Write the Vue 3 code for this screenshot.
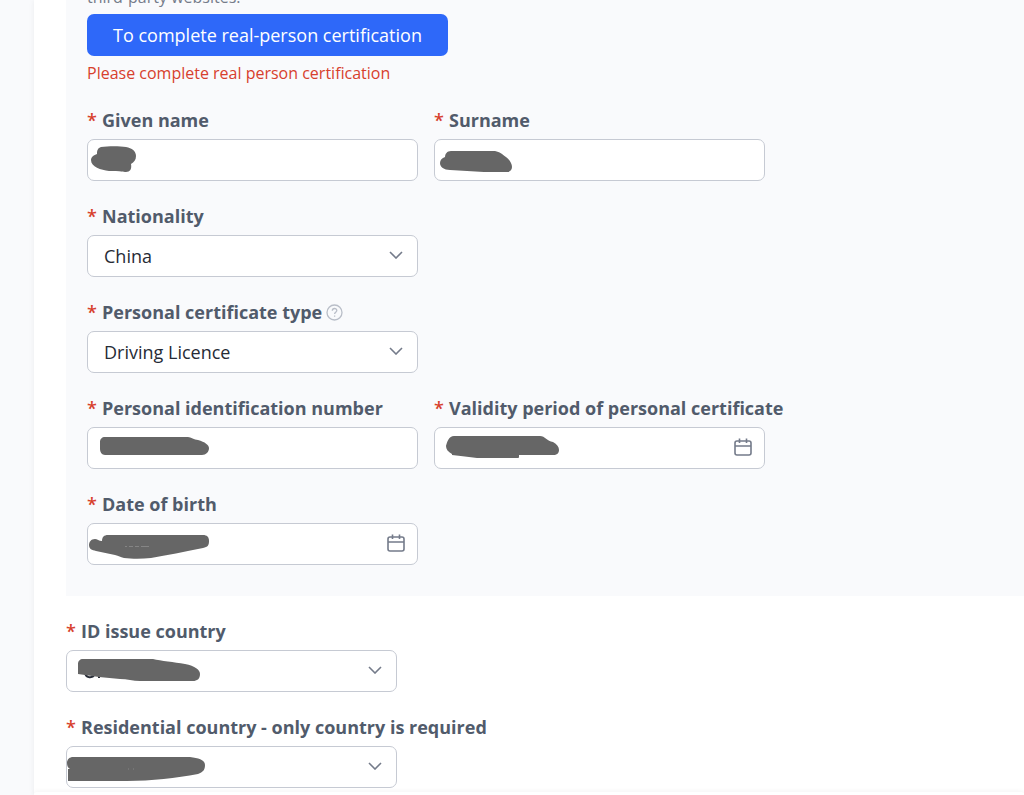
<script setup>
import { ref } from 'vue'

const nationality = ref('China')
const certificateType = ref('Driving Licence')

const marks = {
  given: 'M14 8C21 7 33 7 39 8C45 9 49 12 49 17C49 21 47 23 44 25C45 30 43 33 39 33C36 33 35 32 22 32C14 31 4 28 4 21C4 18 7 16 10 15C10 11 11 9 14 8Z',
  surname: 'M17 12H61C66 13 68 15 72 18C76 21 78 25 78 28C78 31 76 33 73 33L50 33L16 31C10 31 6 28 6 24C6 21 8 19 11 18C11 15 13 12 17 12Z',
  number: 'M18 10H101C104 10 107 13 111 13C118 15 122 18 122 21C122 25 119 28 115 28H18C15 28 13 25 13 22V15C13 12 15 10 18 10Z',
  validity: 'M20 9H106C111 9 113 14 119 15C123 17 125 20 125 23C125 26 123 28 119 28H85V30C85 31 84 31 83 31H43C35 30 27 29 18 28V27C14 25 12 22 12 19C13 15 15 9 20 9Z',
  birth: 'M21 12H116C120 12 122 14 122 18C122 22 121 24 116 25C97 29 80 32 64 35C55 36 45 36 37 35C33 34 32 33 28 32L9 28C5 27 2 26 2 22C2 19 4 16 8 16C10 16 12 18 15 18C15 14 17 12 21 12Z',
  issue: 'M17 9H87C95 11 108 12 119 14C129 16 134 20 134 24C134 29 131 31 127 31H74C67 31 61 29 54 29C40 28 26 26 12 24V14C12 11 14 9 17 9Z',
  residence: 'M7 11H124C133 12 139 14 139 19C139 24 137 26 132 28C110 32 86 35 61 35H2V23H4C2 22 1 20 1 17C1 13 4 11 7 11Z',
}
</script>

<template>
  <div class="page">
    <aside class="rail"></aside>
    <main class="main">
      <form class="content" @submit.prevent>
        <section class="panel">
          <p class="notice">third-party websites.</p>
          <button type="button" class="primary">To complete real-person certification</button>
          <p class="error">Please complete real person certification</p>

          <div class="fields">
            <div class="field">
              <label for="given"><i>*</i>Given name</label>
              <div class="control">
                <input id="given" type="text" />
                <svg class="mark" viewBox="0 0 331 42"><path :d="marks.given" /></svg>
              </div>
            </div>
            <div class="field">
              <label for="surname"><i>*</i>Surname</label>
              <div class="control">
                <input id="surname" type="text" />
                <svg class="mark" viewBox="0 0 331 42"><path :d="marks.surname" /></svg>
              </div>
            </div>
            <div class="field wide">
              <label for="nationality"><i>*</i>Nationality</label>
              <div class="control">
                <select id="nationality" v-model="nationality"><option>China</option></select>
                <svg class="chevron" viewBox="0 0 14 8"><path d="M1 1L7 7L13 1" /></svg>
              </div>
            </div>
            <div class="field wide">
              <label for="certtype"><i>*</i>Personal certificate type
                <svg class="help" viewBox="0 0 17 17"><circle cx="8.5" cy="8.5" r="7.5" /><path d="M6.3 6.8C6.3 3.7 10.8 3.8 10.8 6.6C10.8 8.2 8.6 8.3 8.6 10M8.6 11.6V12.8" /></svg>
              </label>
              <div class="control">
                <select id="certtype" v-model="certificateType"><option>Driving Licence</option></select>
                <svg class="chevron" viewBox="0 0 14 8"><path d="M1 1L7 7L13 1" /></svg>
              </div>
            </div>
            <div class="field">
              <label for="number"><i>*</i>Personal identification number</label>
              <div class="control">
                <input id="number" type="text" />
                <svg class="mark" viewBox="0 0 331 42"><path :d="marks.number" /></svg>
              </div>
            </div>
            <div class="field">
              <label for="validity"><i>*</i>Validity period of personal certificate</label>
              <div class="control">
                <input id="validity" type="text" />
                <svg class="mark" viewBox="0 0 331 42"><path :d="marks.validity" /></svg>
                <svg class="calendar" viewBox="0 0 18 18"><path d="M3 3H15Q17 3 17 5V15Q17 17 15 17H3Q1 17 1 15V5Q1 3 3 3ZM1 8H17M5.5 0.5V5M12.5 0.5V5" /></svg>
              </div>
            </div>
            <div class="field wide">
              <label for="birth"><i>*</i>Date of birth</label>
              <div class="control">
                <input id="birth" type="text" />
                <svg class="mark" viewBox="0 0 331 42"><path :d="marks.birth" /><path class="trace" d="M38 23.5H40M42 23.5H46M48 23.5H52M54 23.5H62" /></svg>
                <svg class="calendar" viewBox="0 0 18 18"><path d="M3 3H15Q17 3 17 5V15Q17 17 15 17H3Q1 17 1 15V5Q1 3 3 3ZM1 8H17M5.5 0.5V5M12.5 0.5V5" /></svg>
              </div>
            </div>
          </div>
        </section>

        <section class="fields outer">
          <div class="field wide">
            <label for="issue"><i>*</i>ID issue country</label>
            <div class="control">
              <select id="issue"><option></option></select>
              <svg class="mark" viewBox="0 0 331 42"><path class="ink" d="M19 23C20 28 25 28 28 26M33 26V28" /><path :d="marks.issue" /></svg>
              <svg class="chevron" viewBox="0 0 14 8"><path d="M1 1L7 7L13 1" /></svg>
            </div>
          </div>
          <div class="field wide">
            <label for="residence"><i>*</i>Residential country - only country is required</label>
            <div class="control">
              <select id="residence"><option></option></select>
              <svg class="mark" viewBox="0 0 331 42"><path :d="marks.residence" /><path class="trace" d="M62 23H63M67 23H68" /></svg>
              <svg class="chevron" viewBox="0 0 14 8"><path d="M1 1L7 7L13 1" /></svg>
            </div>
          </div>
        </section>
      </form>
      <footer class="footer"></footer>
    </main>
  </div>
</template>

<style>
body {
  margin: 0;
  overflow: hidden;
}
</style>

<style scoped>
* {
  box-sizing: border-box;
}
.page {
  display: flex;
  height: 100vh;
  overflow: hidden;
  background: #f9fafc;
  color: #262b36;
  font-family: "Open Sans", "Noto Sans", sans-serif;
  font-size: 18px;
}
.rail {
  flex: 0 0 34px;
}
.main {
  display: flex;
  flex: 1;
  flex-direction: column;
  min-width: 0;
  background: #fff;
  box-shadow: 0 0 6px rgba(0, 0, 0, 0.06);
}
.content {
  flex: 1;
  min-height: 0;
  padding-left: 32px;
  overflow: hidden;
}
.panel {
  display: flow-root;
  padding: 0 21px 31px;
  background: #f9fafc;
}
.notice {
  margin: -15px 0 5px;
  color: #757c8a;
  font-size: 16px;
  line-height: 24px;
}
.primary {
  display: block;
  min-width: 361px;
  height: 42px;
  padding: 0 22px;
  border: 0;
  border-radius: 7px;
  background: #2e68f9;
  color: #fff;
  font: inherit;
}
.error {
  margin: 5px 0 23px;
  color: #d7402d;
  font-size: 16px;
  line-height: 24px;
}
.fields {
  display: grid;
  grid-template-columns: 331px minmax(331px, 1fr);
  gap: 23px 16px;
}
.outer {
  padding-top: 23px;
}
.wide {
  grid-column: 1 / -1;
}
label {
  display: flex;
  align-items: center;
  height: 24px;
  margin-bottom: 7px;
  color: #515b6b;
  font-weight: 700;
  line-height: 24px;
  white-space: nowrap;
}
label i {
  flex: 0 0 15px;
  color: #d7402d;
  font-style: normal;
  font-weight: 600;
}
.help {
  width: 17px;
  height: 17px;
  margin-left: 4px;
  fill: none;
  stroke: #b9bec8;
  stroke-width: 1.3;
}
.control {
  position: relative;
  width: 331px;
  height: 42px;
}
input,
select {
  width: 100%;
  height: 100%;
  padding: 0 40px 0 16px;
  border: 1px solid #c6cad3;
  border-radius: 7px;
  outline: 0;
  appearance: none;
  background: #fff;
  color: inherit;
  font: inherit;
}
.mark {
  position: absolute;
  inset: 0;
  width: 331px;
  height: 42px;
  fill: #666;
  pointer-events: none;
}
.trace {
  stroke: #858585;
  stroke-width: 1;
}
.ink {
  fill: none;
  stroke: #262b36;
  stroke-width: 2;
}
.chevron,
.calendar {
  position: absolute;
  fill: none;
  stroke: #747b8a;
  stroke-width: 1.6;
  pointer-events: none;
}
.chevron {
  top: 16px;
  right: 15px;
  width: 14px;
  height: 8px;
}
.calendar {
  top: 11px;
  right: 13px;
  width: 18px;
  height: 18px;
}
.footer {
  flex: 0 0 3px;
  border-radius: 12px 12px 0 0;
  background: #fff;
  box-shadow: 0 0 5px rgba(0, 0, 0, 0.08);
}
</style>
